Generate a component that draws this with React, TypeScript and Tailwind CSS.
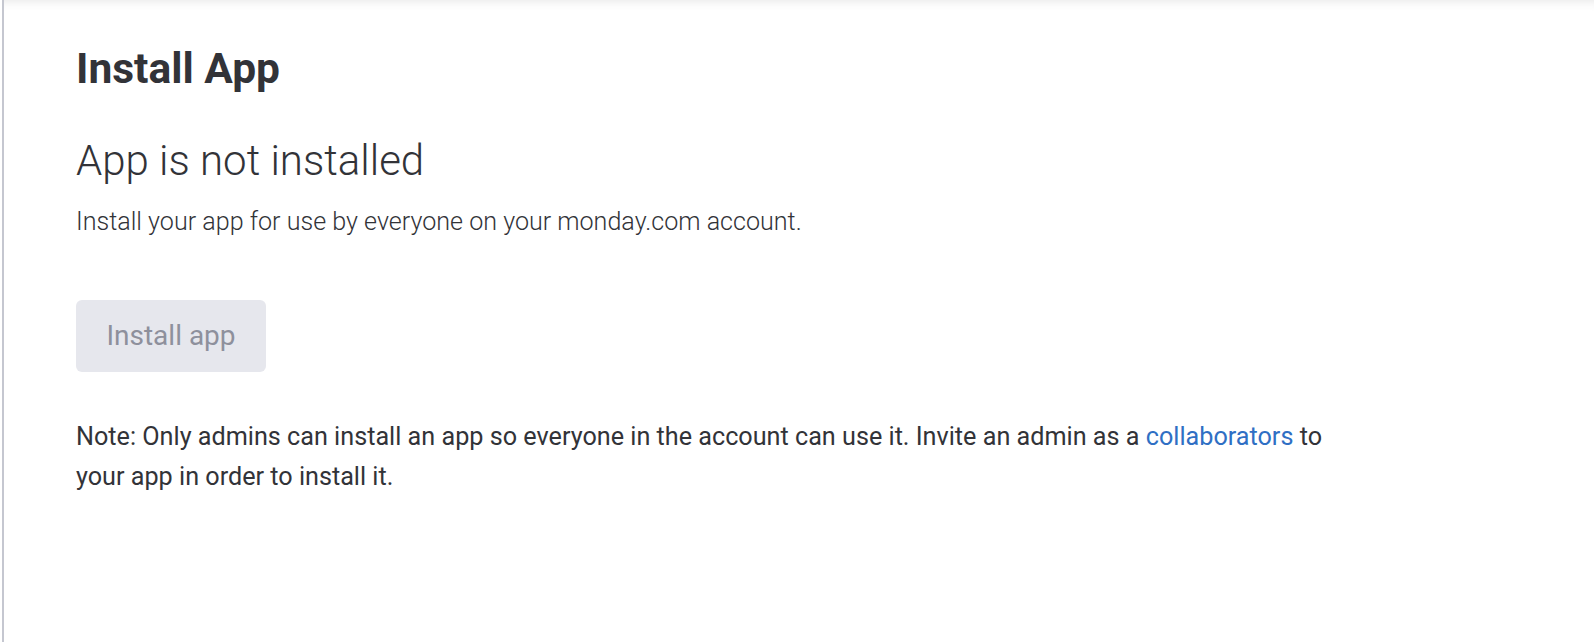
export default function App() {
  return (
    <div className="min-h-[642px] w-full bg-white font-['Roboto',sans-serif] text-[#323338]">
      <div className="ml-[2px] min-h-[642px] border-l-2 border-[#c5c7d0] shadow-[inset_0_12px_12px_-12px_rgba(0,0,0,0.12)]">
        <div className="pl-[72px] pt-[44px]">
          <h1 className="text-[42.5px] leading-[50px] font-bold">Install App</h1>

          <h2 className="mt-[42px] text-[42px] leading-[50px] font-light">App is not installed</h2>
          <p className="mt-[20px] text-[25.1px] leading-[32px] font-light">
            Install your app for use by everyone on your monday.com account.
          </p>

          <button
            disabled
            className="mt-[62px] h-[72px] w-[190px] rounded-[6px] bg-[#e6e7ed] text-[28px] text-[#8e909c]"
          >
            Install app
          </button>

          <p className="mt-[45px] max-w-[1264px] text-[25.2px] leading-[40px]">
            Note: Only admins can install an app so everyone in the account can use it. Invite an admin as a{' '}
            <a className="text-[#2f6fc4]">collaborators</a> to your app in order to install it.
          </p>
        </div>
      </div>
    </div>
  );
}
